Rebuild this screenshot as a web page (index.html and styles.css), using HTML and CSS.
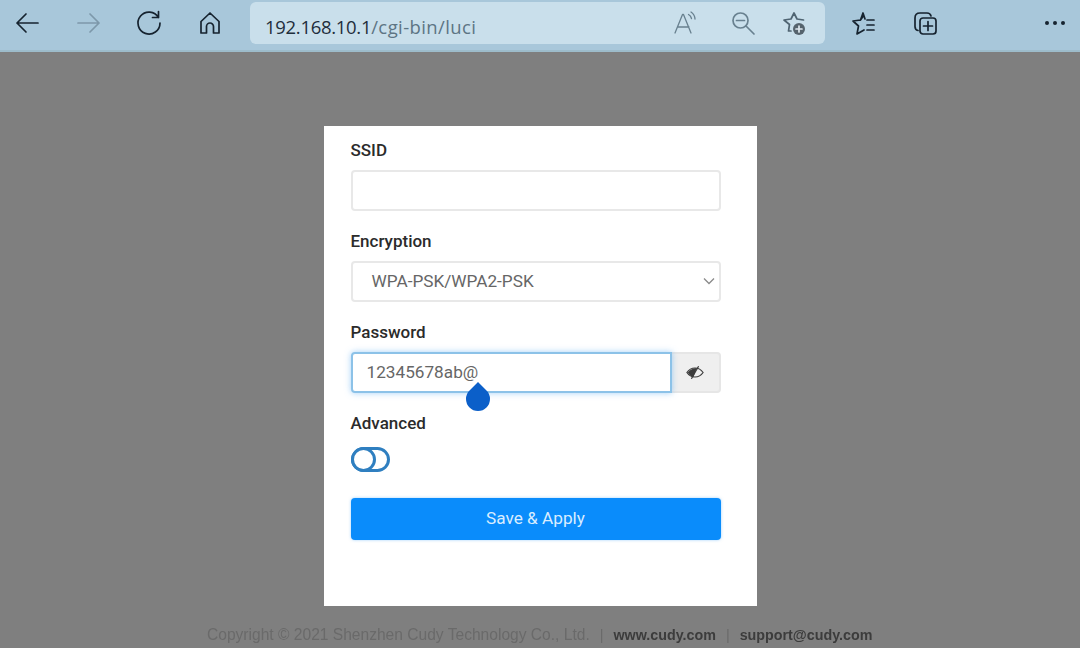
FILE: index.html
```html
<!DOCTYPE html>
<html lang="en">
<head>
<meta charset="utf-8">
<title>Cudy Wi-Fi settings</title>
<link rel="stylesheet" href="styles.css">
</head>
<body>
<header class="toolbar">
  <svg class="icon" viewBox="0 0 24 24"><path class="st-dark" d="M23 12H2M11 3l-9 9 9 9"/></svg>
  <svg class="icon gap-38 muted" viewBox="0 0 24 24"><path class="st-muted" d="M1 12h21M13 3l9 9-9 9"/></svg>
  <svg class="icon gap-36" viewBox="0 0 24 24"><path class="st-dark" d="M21.500 .5v6h-6M21.500 6.500A11 11 0 1 0 23 12"/></svg>
  <svg class="icon gap-37" viewBox="0 0 24 24"><path class="st-dark" d="M3 22V10.500L12 2l9 8.500V22h-5.500v-6.500a3.500 3.500 0 0 0-7 0V22z"/></svg>
  <div class="address">
    <span class="url"><span class="host">192.168.10.1</span>/cgi-bin/luci</span>
    <div class="addr-tools">
      <svg class="icon" viewBox="0 0 24 24"><path class="st-gray thin" d="M2 22 9.500 3.500h1L18 22M5 16h11M15.500 3.500a6 6 0 0 1 3 4M18 1a9 9 0 0 1 4 7"/></svg>
      <svg class="icon gap-34" viewBox="0 0 24 24"><path class="st-gray" d="M15 15l8 8M5.500 9.500h8"/><circle class="st-gray" cx="9.500" cy="9.500" r="7.500"/></svg>
      <svg class="icon gap-26" viewBox="0 0 24 24"><path class="st-dim" d="M10 20H7.500l1-6.500L3 9l7-1 3-6 3 6 6.500 1"/><circle class="badge" cx="18" cy="18" r="6"/><path class="st-white" d="M18 15v6M15 18h6"/></svg>
    </div>
  </div>
  <svg class="icon gap-26" viewBox="0 0 24 24"><path class="st-dark" d="M12 5.500 9.500 9 2 10l5.500 5-1.500 8 7-4M9.500 9 12 2l2 6M16 9h7M16 14h7M16 19h7"/></svg>
  <svg class="icon gap-38" viewBox="0 0 24 24"><path class="st-dark" d="M5 19.500C3 19 2 17.500 2 15.500V7c0-3 2-5 5-5h7c2 0 3.500 1 4 3"/><rect class="st-dark" x="7" y="7" width="16" height="16" rx="3"/><path class="st-dark" d="M15 10.500v9M10.500 15h9"/></svg>
  <div class="more" aria-label="More"><i></i><i></i><i></i></div>
</header>

<main class="stage">
  <form class="card">
    <div class="field">
      <label class="label">SSID</label>
      <div class="box"></div>
    </div>
    <div class="field">
      <label class="label">Encryption</label>
      <div class="box select">
        <span>WPA-PSK/WPA2-PSK</span>
        <svg class="chev" viewBox="0 0 12 8"><path d="M1 1.500 6 6.500l5-5"/></svg>
      </div>
    </div>
    <div class="field">
      <label class="label">Password</label>
      <div class="group">
        <div class="box focus">
          <span>12345678ab@</span>
          <span class="handle"></span>
        </div>
        <div class="eye">
          <svg viewBox="0 0 20 14"><path class="eye-line" d="M1 7c2-3 5-5 9-5s7 2 9 5c-2 3-5 5-9 5S3 10 1 7z"/><path class="eye-fill" d="M2 7c2-3 5-4.500 10-5L8 12.500C5.500 11.500 3.500 9.500 2 7z"/><path class="eye-line" d="M14 0 6 14"/></svg>
        </div>
      </div>
    </div>
    <div class="field">
      <label class="label">Advanced</label>
      <div class="toggle"><span class="knob"></span></div>
    </div>
    <div class="button">Save &amp; Apply</div>
  </form>
</main>

<footer class="footer">
  <span class="copy">Copyright © 2021 Shenzhen Cudy Technology Co., Ltd.</span>
  <span class="sep">|</span>
  <b>www.cudy.com</b>
  <span class="sep">|</span>
  <b>support@cudy.com</b>
</footer>
</body>
</html>
```

FILE: styles.css
```css
* { box-sizing: border-box; }

html, body {
  margin: 0;
  height: 648px;
  overflow: hidden;
}

body {
  display: flex;
  flex-direction: column;
  background: #7f7f7f;
  font-family: Roboto, "Liberation Sans", sans-serif;
}

.toolbar {
  height: 52px;
  flex: none;
  display: flex;
  align-items: center;
  padding: 0 15px 4px;
  background: #a8c7da;
  border-bottom: 2px solid #9dbccb;
}

.icon {
  width: 24px;
  height: 24px;
  flex: none;
  overflow: visible;
}

.icon path, .icon circle, .icon rect {
  fill: none;
  stroke-width: 1.700;
  stroke-linecap: round;
  stroke-linejoin: round;
}

.icon .st-dark { stroke: #16232f; }
.icon .st-muted { stroke: #7d98aa; }
.icon .st-gray { stroke: #68808f; }
.icon .st-dim { stroke: #4f6472; }
.icon .st-white { stroke: #dfe9ef; }
.icon .thin { stroke-width: 1.300; }
.icon .badge { fill: #55636d; stroke: none; }

.gap-26 { margin-left: 26px; }
.gap-34 { margin-left: 34px; }
.gap-36 { margin-left: 36px; }
.gap-37 { margin-left: 37px; }
.gap-38 { margin-left: 38px; }

.address {
  width: 575px;
  height: 42px;
  margin-left: 28px;
  padding: 0 20px 0 15px;
  flex: none;
  display: flex;
  align-items: center;
  justify-content: space-between;
  background: #c9dfeb;
  border-radius: 6px;
  font-family: "Open Sans", sans-serif;
  font-size: 18.500px;
}

.url { color: #5d7584; letter-spacing: .4px; padding-top: 6px; }
.host { color: #1f2e3c; letter-spacing: -.3px; }

.addr-tools { display: flex; align-items: center; }

.more {
  display: flex;
  gap: 4px;
  margin-left: auto;
}

.more i {
  width: 4px;
  height: 4px;
  border-radius: 50%;
  background: #16232f;
}

.stage {
  flex: 1;
  display: flex;
  justify-content: center;
  align-items: flex-start;
  padding-top: 74px;
}

.card {
  width: 433px;
  height: 480px;
  padding: 14px 36px 0 27px;
  background: #fff;
}

.field { margin-bottom: 20px; }

.label {
  display: block;
  height: 20px;
  margin-bottom: 10px;
  color: #2b2b2b;
  font-size: 17px;
  font-weight: 500;
  line-height: 20px;
}

.box {
  position: relative;
  height: 41px;
  padding-bottom: 2px;
  display: flex;
  align-items: center;
  background: #fff;
  border: 2px solid #e8e8e8;
  border-radius: 4px;
  color: #666;
  font-size: 17.200px;
}

.select {
  padding-left: 19px;
  justify-content: space-between;
  padding-right: 4px;
}

.chev { width: 12px; height: 8px; }
.chev path { fill: none; stroke: #8a8a8a; stroke-width: 1.300; }

.group { display: flex; }

.focus {
  flex: 1;
  padding-left: 14px;
  border-color: #8cc2e8;
  border-radius: 4px 0 0 4px;
  box-shadow: 0 0 6px rgba(90, 170, 240, .55);
  z-index: 1;
}

.handle {
  position: absolute;
  left: 113px;
  top: 33px;
  width: 24px;
  height: 24px;
  background: #0b5fc9;
  border-radius: 50% 0 50% 50%;
  transform: rotate(-45deg);
}

.eye {
  width: 49px;
  height: 41px;
  display: flex;
  align-items: center;
  justify-content: center;
  background: #efefef;
  border: 2px solid #e6e6e6;
  border-left: 0;
  border-radius: 0 4px 4px 0;
}

.eye svg { width: 18px; height: 13px; }
.eye-line { fill: none; stroke: #3c3c3c; stroke-width: 1.300; }
.eye-fill { fill: #3c3c3c; }

.field:nth-child(4) { margin-bottom: 26px; }
.field:nth-child(4) .label { margin-bottom: 14px; }

.toggle {
  width: 39px;
  height: 25px;
  border: 3px solid #2f7fc0;
  border-radius: 13px;
  position: relative;
}

.knob {
  position: absolute;
  left: -3px;
  top: -3px;
  width: 25px;
  height: 25px;
  border: 3px solid #2f7fc0;
  border-radius: 50%;
  background: #fff;
}

.button {
  height: 42px;
  padding-bottom: 2px;
  display: flex;
  align-items: center;
  justify-content: center;
  background: #0a8cfb;
  border-radius: 4px;
  color: #d9edff;
  font-size: 17.200px;
  box-shadow: 0 0 3px rgba(60, 160, 250, .5);
}

.footer {
  position: absolute;
  left: 207px;
  top: 626px;
  display: flex;
  gap: 10px;
  color: #3c3c3c;
  font-family: "Liberation Sans", sans-serif;
  font-size: 14.300px;
  line-height: 18px;
  white-space: nowrap;
  filter: blur(.5px);
}

.copy { color: #6a6a6a; font-size: 15.580px; }
.sep { color: #6a6a6a; }
.footer b { font-weight: 700; }
```
